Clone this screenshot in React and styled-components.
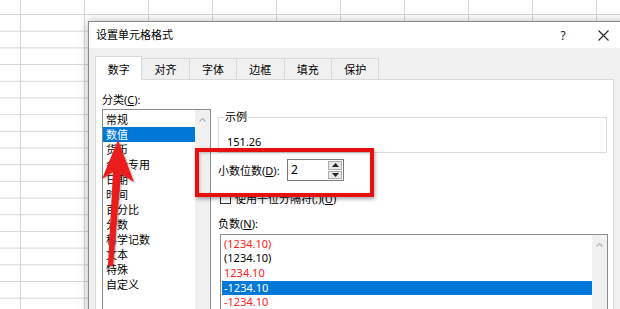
import React from 'react'
import styled, { createGlobalStyle } from 'styled-components'

const GlobalStyle = createGlobalStyle`
html, body {
  margin: 0;
  padding: 0;
}
body {
  width: 620px;
  height: 309px;
  overflow: hidden;
  background: #fff;
  font-family: "Noto Sans", "Noto Sans CJK SC", sans-serif;
  font-size: 11px;
  color: #000;
}
`

const categories = ['常规', '数值', '货币', '会计专用', '日期', '时间', '百分比', '分数', '科学记数', '文本', '特殊', '自定义']

const negatives = [
  { text: '(1234.10)', red: true },
  { text: '(1234.10)', red: false },
  { text: '1234.10', red: true },
  { text: '-1234.10', red: false, selected: true },
  { text: '-1234.10', red: true },
]

const tabs = ['数字', '对齐', '字体', '边框', '填充', '保护']

const Caret = ({ down }) => (
  <svg width="7" height="4" viewBox="0 0 7 4">
    <polyline
      points={down ? '0.5,0.5 3.5,3.5 6.5,0.5' : '0.5,3.5 3.5,0.5 6.5,3.5'}
      fill="none"
      stroke="#b4b4b4"
      strokeWidth="1.2"
    />
  </svg>
)

const Tri = ({ down }) => (
  <svg width="7" height="4" viewBox="0 0 7 4">
    <polygon points={down ? '0,0 7,0 3.5,4' : '0,4 7,4 3.5,0'} fill="#222" />
  </svg>
)

const App = () => {
  return (
    <Sheet>
      <GlobalStyle />
      <Dialog>
        <TitleBar>
          <Title>设置单元格格式</Title>
          <TitleButtons>
            <TitleButton>?</TitleButton>
            <TitleButton>
              <svg width="11" height="11" viewBox="0 0 11 11">
                <path d="M0.5 0.5 L10.5 10.5 M10.5 0.5 L0.5 10.5" stroke="#222" strokeWidth="1.1" />
              </svg>
            </TitleButton>
          </TitleButtons>
        </TitleBar>
        <Body>
          <TabRow>
            {tabs.map((t, i) => (
              <Tab key={t} $active={i === 0}>{t}</Tab>
            ))}
          </TabRow>
          <Panel>
            <LeftCol>
              <Label>分类(<u>C</u>):</Label>
              <ListBox $w={109}>
                <ListItems>
                  {categories.map((c, i) => (
                    <Item key={c} $selected={i === 1}>{c}</Item>
                  ))}
                </ListItems>
                <ScrollBar>
                  <Caret />
                </ScrollBar>
              </ListBox>
            </LeftCol>
            <RightCol>
              <Sample>
                <Legend>示例</Legend>
                <SampleValue>151.26</SampleValue>
              </Sample>
              <SpinRow>
                <SpinLabel>小数位数(<u>D</u>):</SpinLabel>
                <Spinner>
                  <SpinValue>2</SpinValue>
                  <SpinButtons>
                    <SpinButton><Tri /></SpinButton>
                    <SpinButton><Tri down /></SpinButton>
                  </SpinButtons>
                </Spinner>
              </SpinRow>
              <CheckRow>
                <CheckBox />
                <span>使用千位分隔符(,)(<u>U</u>)</span>
              </CheckRow>
              <NegLabel>负数(<u>N</u>):</NegLabel>
              <ListBox $w={388} $ml={2}>
                <ListItems $pl={1}>
                  {negatives.map((n, i) => (
                    <NegItem key={i} $red={n.red} $selected={n.selected}>{n.text}</NegItem>
                  ))}
                </ListItems>
                <ScrollBar>
                  <Caret />
                </ScrollBar>
              </ListBox>
            </RightCol>
          </Panel>
        </Body>
      </Dialog>
      <Highlight />
      <Arrow width="620" height="309" viewBox="0 0 620 309">
        <defs>
          <filter id="sh" x="-50%" y="-50%" width="200%" height="200%">
            <feDropShadow dx="1" dy="1" stdDeviation="1.2" floodColor="#000" floodOpacity="0.35" />
          </filter>
        </defs>
        <polygon
          points="118,140 134,182 121,174 113,266 108,266 113,172 102,179"
          fill="#ea1c1c"
          filter="url(#sh)"
          strokeLinejoin="round"
        />
      </Arrow>
    </Sheet>
  )
}

export default App

const Sheet = styled.div`
position: relative;
width: 620px;
height: 309px;
overflow: hidden;
box-sizing: border-box;
padding: 21px 0 0 88px;
background-color: #fff;
background-image:
  linear-gradient(to right, #d6d6d6 0 1px, transparent 1px),
  linear-gradient(to bottom, #d6d6d6 0 1.4px, transparent 1.4px);
background-size: 64px 100%, 100% 16.7px;
background-position: 20px 0, 0 14px;
`

const Dialog = styled.div`
width: 545px;
height: 320px;
border: 1px solid #8a8a8a;
background: #f0f0f0;
box-shadow: 0 0 9px rgba(0, 0, 0, 0.28);
display: flex;
flex-direction: column;
flex-shrink: 0;
`

const TitleBar = styled.div`
height: 26px;
background: #fff;
display: flex;
align-items: center;
padding-left: 7px;
`

const Title = styled.div`
font-size: 11px;
line-height: 26px;
`

const TitleButtons = styled.div`
margin-left: auto;
display: flex;
padding-right: 11px;
`

const TitleButton = styled.div`
width: 40px;
height: 26px;
display: flex;
align-items: center;
justify-content: center;
font-size: 12px;
color: #222;
`

const Body = styled.div`
flex: 1;
padding: 8px 0 0 6px;
display: flex;
flex-direction: column;
`

const TabRow = styled.div`
display: flex;
align-items: flex-end;
height: 24px;
margin-bottom: -1px;
position: relative;
z-index: 1;
`

const Tab = styled.div`
width: 47.4px;
box-sizing: border-box;
height: ${p => (p.$active ? '24px' : '22px')};
display: flex;
align-items: center;
justify-content: center;
border: 1px solid #d9d9d9;
border-left-width: ${p => (p.$active ? '1px' : '0')};
border-bottom: ${p => (p.$active ? 'none' : '1px solid #d9d9d9')};
background: ${p => (p.$active ? '#fff' : '#f0f0f0')};
font-size: 11px;
padding-top: ${p => (p.$active ? '1px' : '0')};
&:nth-child(2) {
  border-left-width: 0;
}
`

const Panel = styled.div`
width: 519px;
flex: 1;
box-sizing: border-box;
background: #fff;
border: 1px solid #d9d9d9;
display: flex;
gap: 7px;
padding-left: 6px;
`

const LeftCol = styled.div`
width: 109px;
padding-top: 12px;
display: flex;
flex-direction: column;
`

const Label = styled.div`
line-height: 16px;
height: 16px;
margin-bottom: 1px;
`

const ListBox = styled.div`
width: ${p => p.$w}px;
margin-left: ${p => p.$ml || 0}px;
flex: 1;
box-sizing: border-box;
border: 1px solid #8c8c8c;
border-bottom: none;
display: flex;
`

const ListItems = styled.div`
flex: 1;
padding-top: 1.5px;
padding-left: ${p => p.$pl || 0}px;
`

const Item = styled.div`
height: 15px;
line-height: 15px;
padding-left: 3px;
background: ${p => (p.$selected ? '#0078d7' : 'transparent')};
color: ${p => (p.$selected ? '#fff' : '#000')};
`

const NegItem = styled.div`
height: 14.7px;
line-height: 14.7px;
padding-left: 2px;
background: ${p => (p.$selected ? '#0078d7' : 'transparent')};
color: ${p => (p.$selected ? '#fff' : p.$red ? '#ff2020' : '#000')};
`

const ScrollBar = styled.div`
width: 15px;
background: #f0f0f0;
display: flex;
justify-content: center;
padding-top: 8px;
box-sizing: border-box;
`

const RightCol = styled.div`
flex: 1;
padding-top: 30px;
padding-right: 6px;
display: flex;
flex-direction: column;
`

const Sample = styled.fieldset`
margin: 0;
width: 389px;
box-sizing: border-box;
border: 1px solid #dcdcdc;
padding: 0 0 2px 8px;
`

const Legend = styled.legend`
padding: 0 1px;
margin-left: -3px;
line-height: 14px;
`

const SampleValue = styled.div`
line-height: 16px;
margin-top: 10px;
`

const SpinRow = styled.div`
display: flex;
align-items: center;
height: 22px;
margin-top: 6px;
`

const SpinLabel = styled.div`
width: 69px;
`

const Spinner = styled.div`
width: 57px;
height: 22px;
box-sizing: border-box;
border: 1px solid #7a7a7a;
display: flex;
background: #fff;
`

const SpinValue = styled.div`
flex: 1;
padding-left: 3px;
line-height: 20px;
font-size: 12px;
`

const SpinButtons = styled.div`
width: 14px;
display: flex;
flex-direction: column;
padding: 1px 1px 1px 0;
gap: 1px;
`

const SpinButton = styled.div`
flex: 1;
background: #e8e8e8;
border: 1px solid #adadad;
display: flex;
align-items: center;
justify-content: center;
`

const CheckRow = styled.div`
display: flex;
align-items: center;
gap: 4px;
height: 16px;
margin-top: 9px;
padding-left: 2px;
`

const CheckBox = styled.div`
width: 11px;
height: 11px;
box-sizing: border-box;
border: 1px solid #333;
background: #fff;
`

const NegLabel = styled.div`
line-height: 16px;
height: 16px;
margin-top: 10px;
margin-bottom: 2px;
`

const Highlight = styled.div`
position: absolute;
left: 195px;
top: 148px;
width: 179px;
height: 49px;
box-sizing: border-box;
border: 4px solid #e80f0f;
box-shadow: 1px 2px 4px rgba(0, 0, 0, 0.35), inset 1px 1px 3px rgba(0, 0, 0, 0.25);
`

const Arrow = styled.svg`
position: absolute;
left: 0;
top: 0;
pointer-events: none;
`
